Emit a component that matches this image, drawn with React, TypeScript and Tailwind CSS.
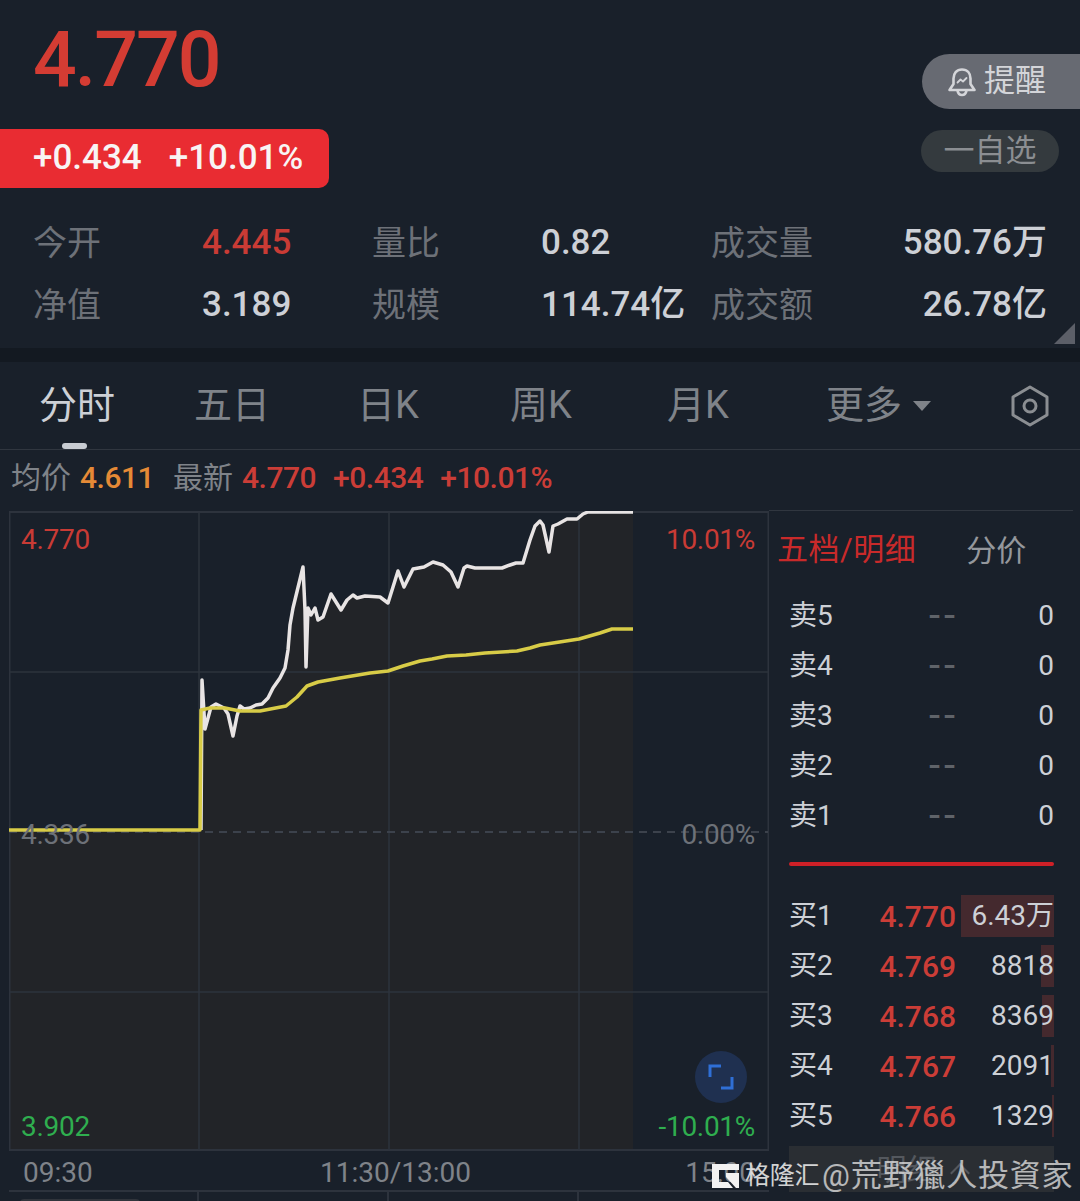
import React from 'react';

const whitePts = "201,830 202,680 205,729 211,707 216,704 224,708 228,714 233,736 237,716 240,706 244,709 250,708 256,705 262,704 268,698 273,688 280,678 285,668 288,650 290,625 293,608 303,567 305,610 306,667 308,608 311,615 315,608 318,620 323,617 331,594 341,610 347,600 353,595 357,598 365,596 380,597 388,603 398,571 404,587 413,569 424,567 433,562 443,565 451,572 458,587 464,568 467,566 475,568 502,568 510,565 516,563 523,563 530,540 535,526 540,521 543,525 549,552 553,526 558,524 567,519 577,519 583,514 588,512 633,512";
const yellowPts = "9,830 200,830 201,710 210,708 225,708 240,711 260,711 286,706 297,697 307,686 318,682 340,678 370,673 388,671 403,666 420,661 432,659 447,656 466,655 485,653 517,651 530,648 540,645 579,639 600,633 612,629 633,629";

const stats = [
  [
    { label: "今开", value: "4.445", red: true },
    { label: "量比", value: "0.82" },
    { label: "成交量", value: "580.76万" },
  ],
  [
    { label: "净值", value: "3.189" },
    { label: "规模", value: "114.74亿" },
    { label: "成交额", value: "26.78亿" },
  ],
];

const tabs = [
  { name: "分时", width: "w-[155px]", active: true },
  { name: "五日", width: "w-[163px]" },
  { name: "日K", width: "w-[153px]" },
  { name: "周K", width: "w-[157px]" },
  { name: "月K", width: "w-[159px]" },
];

const sells = ["卖5", "卖4", "卖3", "卖2", "卖1"];
const buys = [
  { label: "买1", price: "4.770", qty: "6.43万", bar: 93 },
  { label: "买2", price: "4.769", qty: "8818", bar: 13 },
  { label: "买3", price: "4.768", qty: "8369", bar: 12 },
  { label: "买4", price: "4.767", qty: "2091", bar: 3 },
  { label: "买5", price: "4.766", qty: "1329", bar: 2 },
];

const App = () => {
  return (
    <div className="relative w-[1080px] h-[1201px] overflow-hidden bg-[#19202a] font-['Roboto','Noto_Sans_CJK_SC',sans-serif]">
      {/* Quote header */}
      <section className="relative h-[348px]">
        <div className="flex justify-between">
          <div>
            <div className="pl-[33px] pt-[15px] h-[129px] text-[77px] leading-[90px] font-medium tracking-[-2px] text-[#d43c33]">4.770</div>
            <div className="flex items-center w-[329px] h-[59px] pl-[33px] gap-[27px] rounded-r-[10px] bg-[#e92c32] text-[35px] font-medium text-[#f8f4f4]">
              <span>+0.434</span>
              <span>+10.01%</span>
            </div>
          </div>
          <div className="flex flex-col items-end pt-[54px]">
            <div className="flex items-center w-[158px] h-[55px] pl-[25px] gap-[7px] rounded-l-full bg-[#676a72] text-[31px] text-[#d4d5d9]">
              <svg width="30" height="30" viewBox="0 0 30 30" fill="none" stroke="#d4d5d9" strokeWidth="2.600" strokeLinejoin="round" strokeLinecap="round">
                <path d="M15 2.500C9.500 2.500 6.500 6.500 6.500 11.500v5.500L2.500 23h25l-4-6v-5.500C23.500 6.500 20.500 2.500 15 2.500z" />
                <path d="M10.500 23.500c.5 3 2.500 4.500 4.500 4.500s4-1.500 4.500-4.500" />
                <path d="M10.500 15.500l3-3 2.500 2 3.500-3.500" strokeWidth="1.800" />
              </svg>
              <span>提醒</span>
            </div>
            <div className="flex items-center justify-center w-[138px] h-[42px] mt-[21px] mr-[21px] rounded-full bg-[#343a3e] text-[31px] text-[#8b8e92]">一自选</div>
          </div>
        </div>
        <div className="mt-[24px] pl-[33px] pr-[33px]">
          {stats.map((row, i) => (
            <div key={i} className="flex items-center h-[62px] text-[34px]">
              {row.map((s, j) => (
                <React.Fragment key={j}>
                  <span className="w-[169px] shrink-0 text-[#6d7178]">{s.label}</span>
                  <span className={`font-medium text-[35px] ${j === 2 ? 'flex-1 text-right' : 'w-[170px] shrink-0'} ${s.red ? 'text-[#c93b35]' : 'text-[#cdd0d6]'}`}>{s.value}</span>
                </React.Fragment>
              ))}
            </div>
          ))}
        </div>
        <svg className="absolute right-[5px] bottom-[4px]" width="21" height="21" viewBox="0 0 21 21">
          <path d="M21 0v21H0z" fill="#5c5f68" />
        </svg>
      </section>
      <div className="h-[14px] bg-[#131921]" />

      {/* Period tabs */}
      <nav className="relative flex items-center h-[88px] pl-[39px] border-b border-[#30363f] text-[38px] text-[#7f8389]">
        {tabs.map((t) => (
          <div key={t.name} className={`${t.width} ${t.active ? 'text-[#cdd0d6]' : ''}`}>{t.name}</div>
        ))}
        <div className="flex items-center gap-[11px]">
          <span>更多</span>
          <span className="w-0 h-0 border-x-[9px] border-x-transparent border-t-[10px] border-t-[#7f8389]" />
        </div>
        <svg className="absolute left-[1010px] top-[23px]" width="40" height="42" viewBox="0 0 40 42" fill="none" stroke="#8b8e92" strokeWidth="3" strokeLinejoin="round">
          <path d="M20 2l17 10v18L20 40 3 30V12z" />
          <circle cx="20" cy="21" r="6" />
        </svg>
        <div className="absolute left-[62px] bottom-0 w-[25px] h-[6px] rounded-full bg-[#c8ccd2]" />
      </nav>

      {/* Latest line */}
      <div className="flex items-center h-[61px] pb-[6px] pl-[11px] text-[30px]">
        <span className="text-[#7f8389]">均价</span>
        <span className="ml-[9px] text-[#e58a36] font-medium tracking-[-0.5px]">4.611</span>
        <span className="ml-[19px] text-[#7f8389]">最新</span>
        <span className="ml-[9px] text-[#cb3d37] font-medium tracking-[-0.5px]">4.770</span>
        <span className="ml-[17px] text-[#cb3d37] font-medium tracking-[-0.5px]">+0.434</span>
        <span className="ml-[17px] text-[#cb3d37] font-medium tracking-[-0.5px]">+10.01%</span>
      </div>

      <div className="flex">
        {/* Chart column */}
        <div className="w-[760px] ml-[9px] shrink-0">
          <div className="relative h-[640px]">
            <svg className="block" width="760" height="640" viewBox="9 511 760 640">
              <polygon points={`9,830 ${whitePts} 633,1150 9,1150`} fill="#222428" />
              <g stroke="#2d333d" strokeWidth="1.500" fill="none">
                <rect x="9.500" y="512" width="759" height="638" strokeWidth="2" />
                <path d="M199 512v638M389 512v638M579 512v638M9 672h759M9 992h759" />
              </g>
              <path d="M9 832h759" stroke="#3c424c" strokeWidth="2" strokeDasharray="8 6" />
              <polyline points={whitePts} fill="none" stroke="#e8e4e4" strokeWidth="3.500" strokeLinejoin="round" />
              <polyline points={yellowPts} fill="none" stroke="#d8cc47" strokeWidth="3.500" strokeLinejoin="round" />
            </svg>
            <span className="absolute left-[12px] top-[8px] text-[28px] tracking-[-0.3px] text-[#c93b35]">4.770</span>
            <span className="absolute right-[14px] top-[8px] text-[28px] tracking-[-0.3px] text-[#c93b35]">10.01%</span>
            <span className="absolute left-[12px] top-[303px] text-[28px] tracking-[-0.3px] text-[#6d7178]">4.336</span>
            <span className="absolute right-[14px] top-[303px] text-[28px] tracking-[-0.3px] text-[#6d7178]">0.00%</span>
            <span className="absolute left-[12px] top-[595px] text-[28px] tracking-[-0.3px] text-[#2fae4f]">3.902</span>
            <span className="absolute right-[14px] top-[595px] text-[28px] tracking-[-0.3px] text-[#2fae4f]">-10.01%</span>
            <div className="absolute left-[686px] top-[540px] flex items-center justify-center w-[52px] h-[52px] rounded-full bg-[#1f3050]">
              <svg width="26" height="26" viewBox="0 0 26 26" fill="none" stroke="#2f6fd6" strokeWidth="3">
                <path d="M13 2H2v11M24 13v11H13" />
              </svg>
            </div>
          </div>
          <div className="relative flex items-center justify-between h-[39px] pt-[4px] px-[14px] text-[28px] text-[#7f8389]">
            <span>09:30</span>
            <span className="absolute left-[311px]">11:30/13:00</span>
            <span>15:00</span>
          </div>
          <div className="relative grid grid-cols-[190px_190px_190px_1fr] h-[20px] border-t-2 border-[#2d333d]">
            <div className="border-r-2 border-[#2d333d]" />
            <div className="border-r-2 border-[#2d333d]" />
            <div className="border-r-2 border-[#2d333d]" />
            <div className="absolute left-[11px] top-[7px] w-[120px] h-[6px] rounded-t bg-[#30343b]" />
          </div>
        </div>

        {/* Order book */}
        <aside className="relative flex-1 -mt-[1px]">
          <div className="w-[304px] border-t border-[#30363f]" />
          <div className="flex items-center h-[80px] pl-[8px] pb-[2px]">
            <span className="text-[31px] tracking-[0.5px] text-[#c92a2a]">五档/明细</span>
            <span className="ml-[50px] text-[30px] text-[#94979c]">分价</span>
          </div>
          <div className="pl-[20px] pr-[26px]">
            {sells.map((label) => (
              <div key={label} className="flex items-center h-[50px] text-[28px]">
                <span className="w-[80px] text-[#cdd0d6]">{label}</span>
                <span className="w-[90px] text-right text-[40px] leading-none tracking-[4px] text-[#5f6369]">--</span>
                <span className="flex-1 text-right text-[#cdd0d6]">0</span>
              </div>
            ))}
            <div className="h-[4px] mt-[21px] mb-[25px] rounded-full bg-[#cf2027]" />
            {buys.map((b) => (
              <div key={b.label} className="relative flex items-center h-[50px] text-[28px]">
                <div className="absolute right-0 top-[4px] h-[42px] bg-[#44292e]" style={{ width: b.bar }} />
                <span className="relative w-[80px] text-[#cdd0d6]">{b.label}</span>
                <span className="relative w-[87px] text-right text-[30px] font-medium text-[#cb3d37]">{b.price}</span>
                <span className="relative flex-1 text-right text-[#cdd0d6]">{b.qty}</span>
              </div>
            ))}
            <div className="flex items-center justify-center h-[46px] mt-[5px] gap-[16px] bg-[#2a2e33] text-[30px] text-[#54585e]">
              <span>明细</span>
              <span className="w-[14px] h-[14px] mt-[8px] rotate-45 border-l-2 border-t-2 border-[#54585e]" />
            </div>
          </div>
        </aside>
      </div>

      {/* Watermark */}
      <div className="absolute left-[712px] bottom-[10px] flex items-center text-[#e6e6e6]">
        <svg width="27" height="24" viewBox="0 0 27 24" fill="#f2f2f2">
          <path d="M0 0h27v6H7v12h9l5 6H0z" />
          <path d="M14 9h13v15h-3L14 13z" />
        </svg>
        <span className="ml-[6px] text-[25px] leading-none tracking-[-0.3px] opacity-90">格隆汇</span>
        <span className="ml-[3px] text-[31px] leading-none tracking-[0.8px] opacity-75">@荒野獵人投資家</span>
      </div>
    </div>
  );
};

export default App;
